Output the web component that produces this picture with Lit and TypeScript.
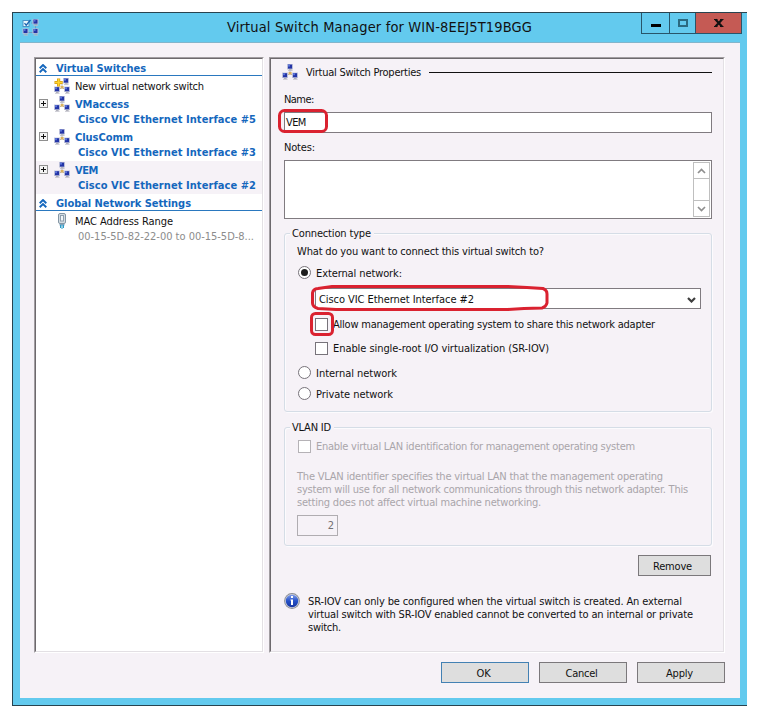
import { LitElement, html, css, svg, nothing } from "lit";
import { customElement, property } from "lit/decorators.js";

const font = css`
  font-family: "DejaVu Sans Condensed", "DejaVu Sans", sans-serif;
  font-stretch: condensed;
`;

/** One line of text whose tracking is adjusted to take up a given width. */
@customElement("fit-text")
class FitText extends LitElement {
  @property({ type: Number }) w = 0;
  static styles = css`
    :host { display: inline-block; white-space: nowrap; flex: none; }
  `;
  firstUpdated() {
    const n = (this.textContent ?? "").length;
    const natural = this.getBoundingClientRect().width;
    if (this.w && n > 1) this.style.letterSpacing = `${(this.w - natural) / (n - 0.5)}px`;
  }
  render() {
    return html`<slot></slot>`;
  }
}

const t = (text: string, w: number, cls = "") => html`<fit-text class=${cls} .w=${w}>${text}</fit-text>`;

const monitor = (x: number, y: number) => svg`
  <g transform="translate(${x} ${y})">
    <rect x="0" y="0" width="6" height="5.400" fill="#b9bdd8"/>
    <rect x="1" y="0.600" width="4" height="4" fill="#2334a6"/>
    <rect x="1" y="0.600" width="2" height="2" fill="#5a74d8"/>
    <rect x="2" y="5.400" width="2.600" height="0.800" fill="#9a9aa6"/>
    <rect x="1" y="6.200" width="4.600" height="0.900" fill="#bcbcc6"/>
  </g>`;

const netIcon = (star = false) => html`
  <svg class="net" width="16" height="16" viewBox="0 0 16 16">
    <path d="M8 6v4M5 11.5l3-2 3 2" stroke="#b4b4bc" fill="none"/>
    <rect x="6.6" y="8" width="3" height="2.6" fill="#d9b25f"/>
    ${star ? monitor(9, 0) : monitor(5, 0)} ${monitor(0, 8.6)} ${monitor(10, 8.6)}
    ${star
      ? svg`<path d="M4.6 0.5v8M0.5 4.5h8.2" stroke="#d39a12" stroke-width="3.2"/><path d="M4.6 1v7M1 4.5h7.2" stroke="#ffd42e" stroke-width="1.7"/>`
      : nothing}
  </svg>`;

const appIcon = html`
  <svg width="17" height="17" viewBox="0 0 17 17">
    <path d="M9 4h3M4 9v2M13.500 7v3M6 13.500h5" stroke="#6d9fc4" fill="none"/>
    <rect x="1" y="1.500" width="6" height="6" fill="#eaf7fd" stroke="#4a94c6"/>
    <path d="M2.500 4.200l1.700 2L8.500 1" stroke="#1b63b0" stroke-width="1.300" fill="none"/>
    ${monitor(10.5, 0)} ${monitor(0.5, 9.4)} ${monitor(10.5, 9.4)}
  </svg>`;

const nicIcon = html`
  <svg class="net" width="16" height="16" viewBox="0 0 16 16">
    <rect x="4.500" y="0.500" width="7" height="10" rx="1.500" fill="#d4dce2" stroke="#8496a4"/>
    <rect x="6.500" y="2.500" width="3" height="5.500" fill="#f2f6f8" stroke="#8fa0ae"/>
    <rect x="5.500" y="11" width="5" height="1.500" fill="#7aa2bd"/>
    <path d="M6.500 12v3M8 12v4M9.500 12v3" stroke="#2c9cc8"/>
  </svg>`;

const chevrons = html`
  <svg class="chev" width="8" height="9" viewBox="0 0 8 9">
    <path d="M0.700 4.200L4 1l3.300 3.200M0.700 8.200L4 5l3.300 3.200" stroke="#1467bd" stroke-width="1.900" fill="none"/>
  </svg>`;

const plus = html`
  <svg class="plus" width="9" height="9" viewBox="0 0 9 9" shape-rendering="crispEdges">
    <rect x="0.500" y="0.500" width="8" height="8" fill="#f4f4f4" stroke="#8f8f8f"/>
    <path d="M2 4.500h5M4.500 2v5" stroke="#111"/>
  </svg>`;

const arrow = (down: boolean, color: string, sw: number) => html`
  <svg width="9" height="6" viewBox="0 0 9 6">
    <path d=${down ? "M1 1l3.500 3.500L8 1" : "M1 5l3.500-3.500L8 5"} stroke=${color} stroke-width=${sw} fill="none"/>
  </svg>`;

const infoIcon = html`
  <svg class="info-icon" width="16" height="16" viewBox="0 0 16 16">
    <defs><linearGradient id="g" x1="0" y1="0" x2="0" y2="1">
      <stop offset="0" stop-color="#7d9bea"/><stop offset=".5" stop-color="#2450c8"/><stop offset="1" stop-color="#1736a0"/>
    </linearGradient></defs>
    <circle cx="8" cy="8" r="7.900" fill="#8a8c94"/><circle cx="8" cy="8" r="7" fill="#c9cedb"/>
    <circle cx="8" cy="8" r="6.200" fill="url(#g)"/>
    <path d="M7 3h2v2H7zM6.500 6.500H9V12H7V7.500h-.5z" fill="#fff"/>
  </svg>`;

@customElement("switch-tree")
class SwitchTree extends LitElement {
  static styles = css`
    :host { ${font} display: block; font-size: 11px; line-height: 13px; color: #111; }
    .head { display: flex; height: 17px; padding: 3px 0 0 3px; box-sizing: border-box; border-bottom: 1px solid #2a78bf; font-weight: bold; color: #1467bd; }
    .chev { margin-right: 9px; width: 8px; margin-top: 2px; }
    .row { display: flex; height: 18px; padding-left: 18px; }
    .row.new { height: 19px; }
    .row .label { margin: 4px 0 0 5px; }
    .net { margin-top: 2px; flex: none; }
    .item { height: 33px; color: #1467bd; font-weight: bold; }
    .item.sel { background: #f6f2f7; }
    .top { display: flex; padding-left: 3px; height: 18px; }
    .plus { margin: 4px 6px 0 0; flex: none; }
    .top .net { margin-top: 1px; }
    .top .label { margin: 3px 0 0 5px; }
    .sub { margin-left: 42px; height: 15px; display: flex; }
    .mac { color: #8c8c8c; margin-top: 1px; }
  `;
  render() {
    const items = [
      ["VMaccess", 54, "Cisco VIC Ethernet Interface #5"],
      ["ClusComm", 58, "Cisco VIC Ethernet Interface #3"],
      ["VEM", 23, "Cisco VIC Ethernet Interface #2"],
    ] as const;
    return html`
      <div class="head">${chevrons}${t("Virtual Switches", 90)}</div>
      <div class="row new">${netIcon(true)}${t("New virtual network switch", 129, "label")}</div>
      ${items.map(
        ([name, w, nic], i) => html`<div class="item ${i === 2 ? "sel" : ""}">
          <div class="top">${plus}${netIcon()}${t(name, w, "label")}</div>
          <div class="sub">${t(nic, 178)}</div>
        </div>`
      )}
      <div class="head">${chevrons}${t("Global Network Settings", 135)}</div>
      <div class="row">${nicIcon}${t("MAC Address Range", 98, "label")}</div>
      <div class="sub mac">${t("00-15-5D-82-22-00 to 00-15-5D-8...", 176)}</div>
    `;
  }
}

@customElement("switch-form")
class SwitchForm extends LitElement {
  static styles = css`
    :host { ${font} display: flex; flex-direction: column; box-sizing: border-box; padding: 5px 11px 0 13px; font-size: 11px; line-height: 13px; color: #111; }
    .title { display: flex; height: 16px; margin-left: -2px; }
    .title .label { margin: 2px 8px 0; }
    .rule { flex: 1; height: 1px; margin-top: 8px; background: #111; }
    .cap { display: flex; height: 13px; }
    .name { margin-top: 13px; }
    .notes { margin-top: 8px; }
    .field { box-sizing: border-box; border: 1px solid #807b80; background: #fff; display: flex; }
    .input { height: 21px; margin-top: 6px; padding: 3px 0 0 1px; }
    .area { height: 59px; margin-top: 6px; justify-content: flex-end; padding: 1px; }
    .scroll { width: 17px; box-sizing: border-box; border: 1px solid #bfbfbf; display: flex; flex-direction: column; justify-content: space-between; }
    .btn { height: 15px; display: flex; align-items: center; justify-content: center; }
    .up { border-bottom: 1px solid #bfbfbf; }
    .down { border-top: 1px solid #bfbfbf; }
    .group { border: 1px solid #d5dde6; border-radius: 3px; box-shadow: inset 1px 1px #fcfbfd, 1px 1px #fcfbfd; box-sizing: border-box; display: flex; flex-direction: column; padding-left: 12px; }
    .conn { margin-top: 14px; height: 179px; }
    .vlan { margin-top: 15px; height: 119px; }
    .legend { align-self: flex-start; margin: -7px 0 0 -7px; padding: 0 3px 0 2px; background: #f6f2f7; height: 13px; display: flex; }
    .opt { display: flex; height: 13px; }
    .radio { width: 13px; height: 13px; margin: -1px 5px 0 1px; box-sizing: border-box; border: 1px solid #77737a; border-radius: 50%; background: #fff; display: flex; align-items: center; justify-content: center; }
    .dot { width: 7px; height: 7px; border-radius: 50%; background: #1d1d1d; }
    .check { width: 13px; height: 13px; box-sizing: border-box; border: 1px solid #77737a; background: #fff; margin-right: 5px; }
    .in { margin-left: 18px; }
    .combo { margin: 8px 10px 0 18px; height: 21px; padding: 4px 4px 0 3px; justify-content: space-between; }
    .combo svg { margin-top: 4px; }
    .off { color: #a9a5aa; }
    .off .check { border-color: #b5b2b6; margin-left: 1px; }
    .g5 { margin-top: 5px; }
    .g6 { margin-top: 6px; }
    .g8 { margin-top: 8px; }
    .g9 { margin-top: 9px; }
    .g11 { margin-top: 11px; }
    .g12 { margin-top: 12px; }
    .para { margin-top: 17px; display: flex; flex-direction: column; align-items: flex-start; }
    .vid { width: 41px; height: 21px; box-sizing: border-box; border: 1px solid #b0adb1; margin-top: 6px; padding: 3px 3px 0 0; text-align: right; color: #737073; }
    .remove { align-self: flex-end; width: 73px; height: 21px; margin: 9px 1px 0 0; box-sizing: border-box; border: 1px solid #7b787b; background: #dedede; display: flex; justify-content: center; padding-top: 4px; padding-right: 4px; }
    .info { display: flex; margin-top: 19px; }
    .info-icon { margin: -2px 8px 0 0; flex: none; }
    .lines { display: flex; flex-direction: column; align-items: flex-start; }
  `;
  render() {
    return html`
      <div class="title">${netIcon()}${t("Virtual Switch Properties", 115, "label")}<div class="rule"></div></div>
      <div class="cap name">${t("Name:", 30)}</div>
      <div class="field input">${t("VEM", 20)}</div>
      <div class="cap notes">${t("Notes:", 31)}</div>
      <div class="field area">
        <div class="scroll">
          <div class="btn up">${arrow(false, "#8f8f8f", 1.7)}</div>
          <div class="btn down">${arrow(true, "#8f8f8f", 1.7)}</div>
        </div>
      </div>
      <div class="group conn">
        <div class="legend">${t("Connection type", 79)}</div>
        <div class="opt g5">${t("What do you want to connect this virtual switch to?", 247)}</div>
        <div class="opt g9"><div class="radio"><div class="dot"></div></div>${t("External network:", 86)}</div>
        <div class="field combo">${t("Cisco VIC Ethernet Interface #2", 155)}${arrow(true, "#3e3e3e", 2.2)}</div>
        <div class="opt in g9"><div class="check"></div>${t("Allow management operating system to share this network adapter", 322)}</div>
        <div class="opt in g11"><div class="check"></div>${t("Enable single-root I/O virtualization (SR-IOV)", 216)}</div>
        <div class="opt g12"><div class="radio"></div>${t("Internal network", 81)}</div>
        <div class="opt g8"><div class="radio"></div>${t("Private network", 77)}</div>
      </div>
      <div class="group vlan">
        <div class="legend">${t("VLAN ID", 39)}</div>
        <div class="opt off g6"><div class="check"></div>${t("Enable virtual LAN identification for management operating system", 319)}</div>
        <div class="para off">
          ${t("The VLAN identifier specifies the virtual LAN that the management operating", 366)}
          ${t("system will use for all network communications through this network adapter. This", 391)}
          ${t("setting does not affect virtual machine networking.", 244)}
        </div>
        <div class="vid">2</div>
      </div>
      <div class="remove">${t("Remove", 39)}</div>
      <div class="info">
        ${infoIcon}
        <div class="lines">
          ${t("SR-IOV can only be configured when the virtual switch is created. An external", 374)}
          ${t("virtual switch with SR-IOV enabled cannot be converted to an internal or private", 385)}
          ${t("switch.", 33)}
        </div>
      </div>
    `;
  }
}

@customElement("app-root")
class AppRoot extends LitElement {
  static styles = css`
    :host { ${font} display: block; position: relative; width: 760px; height: 719px; background: #fff; overflow: hidden; font-size: 11px; line-height: 13px; color: #111; }
    .window { margin: 0 0 0 12px; width: 735px; height: 694px; box-sizing: border-box; background: #63caee; border: 1px solid #28434f; border-right: 0; display: flex; flex-direction: column; }
    .frame { padding-top: 12px; }
    .bar { height: 29px; display: flex; align-items: flex-start; flex: none; }
    .bar > svg { margin: 6px 0 0 9px; }
    .caption { flex: none; width: 306px; margin: 4px 0 0 188px; font-size: 14.5px; line-height: 20px; }
    .controls { display: flex; margin-left: auto; margin-right: 5px; height: 21px; border: 1px solid #28556a; border-top: 0; box-sizing: border-box; }
    .ctl { display: flex; align-items: center; justify-content: center; box-sizing: border-box; }
    .min { width: 28px; border-right: 1px solid #28556a; }
    .max { width: 26px; border-right: 1px solid #28556a; }
    .close { width: 45px; background: #c55a54; }
    .client { margin: 0 7px 7px 7px; flex: 1; background: #f6f2f7; border-top: 1px solid #82b5cb; box-sizing: border-box; padding: 14px 15px 0 14px; display: flex; flex-direction: column; }
    .panes { display: flex; gap: 5px; height: 596px; }
    .sunken { box-sizing: border-box; border: 1px solid; border-color: #a19da1 #fff #fff #a19da1; }
    .inner { height: 100%; box-sizing: border-box; border: 1px solid; border-color: #6d696d #e3e0e4 #e3e0e4 #6d696d; }
    .left { width: 230px; }
    .left .inner { background: #fff; }
    .right { flex: 1; }
    .buttons { display: flex; justify-content: flex-end; gap: 10px; margin-top: 9px; }
    .push { width: 88px; height: 21px; box-sizing: border-box; border: 1px solid #7b787b; background: #dedede; display: flex; justify-content: center; padding: 4px 3px 0 0; }
    .ok { border-color: #4381b3; }
    .marks { position: absolute; left: 0; top: 0; pointer-events: none; }
  `;
  render() {
    return html`
      <div class="frame">
        <div class="window">
          <div class="bar">
            ${appIcon}
            <div class="caption">${t("Virtual Switch Manager for WIN-8EEJ5T19BGG", 305)}</div>
            <div class="controls">
              <div class="ctl min"><svg width="10" height="20"><rect y="11" width="10" height="3" fill="#000"/></svg></div>
              <div class="ctl max"><svg width="10" height="20"><rect x="1" y="7" width="8" height="6" fill="none" stroke="#2b6a80" stroke-width="2"/></svg></div>
              <div class="ctl close"><svg width="10" height="20"><path d="M1.500 6.500l6.500 7M8 6.500l-6.500 7" stroke="#111" stroke-width="2.200"/><path d="M0 6.500h3.500M6 6.500h3.500M0 13.500h3.500M6 13.500h3.500" stroke="#111"/></svg></div>
            </div>
          </div>
          <div class="client">
            <div class="panes">
              <div class="sunken left"><div class="inner"><switch-tree></switch-tree></div></div>
              <div class="sunken right"><div class="inner"><switch-form></switch-form></div></div>
            </div>
            <div class="buttons">
              <div class="push ok">${t("OK", 14)}</div>
              <div class="push">${t("Cancel", 32)}</div>
              <div class="push">${t("Apply", 27)}</div>
            </div>
          </div>
        </div>
      </div>
      <svg class="marks" width="760" height="719" fill="none" stroke="#da2230" stroke-width="3" stroke-linejoin="round">
        <rect x="279.500" y="110.500" width="47" height="21" rx="5"/>
        <path d="M332 286.500H508L527 287.500L543 288.500Q547 290 547 294V303Q546 307 542 308L524 308.500L508 309.500H336L318 308.500Q312.500 307 312.500 303V293Q313 289 318 288.500Z"/>
        <rect x="311.500" y="313.500" width="21" height="21" rx="4"/>
      </svg>
    `;
  }
}
